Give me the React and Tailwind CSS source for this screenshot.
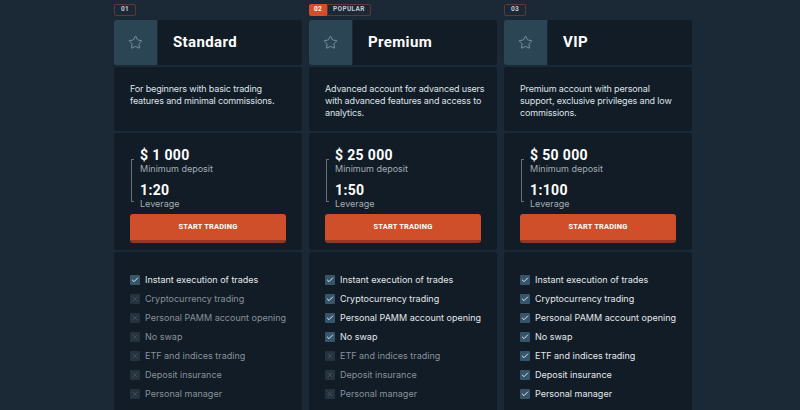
import { Star, Check, X } from 'lucide-react';

const FEATURES = [
  'Instant execution of trades',
  'Cryptocurrency trading',
  'Personal PAMM account opening',
  'No swap',
  'ETF and indices trading',
  'Deposit insurance',
  'Personal manager',
];

const PLANS = [
  {
    num: '01',
    name: 'Standard',
    text: 'For beginners with basic trading features and minimal commissions.',
    deposit: '$ 1 000',
    leverage: '1:20',
    included: 1,
  },
  {
    num: '02',
    name: 'Premium',
    popular: true,
    text: 'Advanced account for advanced users with advanced features and access to analytics.',
    deposit: '$ 25 000',
    leverage: '1:50',
    included: 4,
  },
  {
    num: '03',
    name: 'VIP',
    text: 'Premium account with personal support, exclusive privileges and low commissions.',
    deposit: '$ 50 000',
    leverage: '1:100',
    included: 7,
  },
];

const display = { fontFamily: 'Roboto, "DejaVu Sans", sans-serif' };

function Feature({ label, on }) {
  return (
    <li className="flex items-center gap-[5px] h-[19px] whitespace-nowrap">
      <span
        className={
          'w-[10px] h-[10px] rounded-[1px] flex items-center justify-center ' +
          (on ? 'bg-[#36556a] text-[#dfe7ee]' : 'bg-[#26333e] text-[#3f4d58]')
        }
      >
        {on ? <Check size={8} strokeWidth={3} /> : <X size={8} strokeWidth={3} />}
      </span>
      <span className={on ? 'text-[#e3e7eb]' : 'text-[#87919a]'}>{label}</span>
    </li>
  );
}

function PlanCard({ plan }) {
  return (
    <div className="w-[188px] flex flex-col">
      <div className="flex h-[16px] items-start text-[6.5px] font-bold tracking-wider" style={display}>
        {plan.popular ? (
          <div className="flex">
            <span className="h-[12px] px-[5px] flex items-center bg-[#d34f2c] text-white rounded-l-[2px]">
              {plan.num}
            </span>
            <span className="h-[12px] px-[5px] flex items-center border border-[#5a3a36] text-[#c3c9ce] rounded-r-[2px]">
              POPULAR
            </span>
          </div>
        ) : (
          <span className="h-[12px] px-[6px] flex items-center border border-[#5a3a36] text-[#c3c9ce] rounded-[2px]">
            {plan.num}
          </span>
        )}
      </div>

      <div className="flex h-[46px] gap-px">
        <div className="w-[43px] bg-[#2b4555] rounded-l-[3px] flex items-center justify-center text-[#8aa3b4]">
          <Star size={15} strokeWidth={1.3} />
        </div>
        <div className="flex-1 bg-[#121c26] rounded-r-[3px] flex items-center pl-[15px]">
          <span className="text-white text-[15px] font-bold tracking-wide" style={display}>
            {plan.name}
          </span>
        </div>
      </div>

      <div className="mt-[2px] h-[64px] bg-[#121c26] rounded-[3px] pl-[16px] pr-[4px] pt-[16px] text-[9px] leading-[12px] tracking-[-0.15px] text-[#dde2e6]">
        <p className="max-w-[166px]">{plan.text}</p>
      </div>

      <div className="mt-[2px] h-[118px] bg-[#121c26] rounded-[3px] px-[16px] pt-[14px]">
        <div className="relative pl-[10px]">
          <span className="absolute left-[1px] top-[12px] bottom-[7px] w-[3px] border-l border-t border-b border-[#66717b]" />
          <div className="text-white text-[14px] font-bold leading-[16px] tracking-wide" style={display}>{plan.deposit}</div>
          <div className="text-[#a3acb4] text-[9px] leading-[11px]">Minimum deposit</div>
          <div className="text-white text-[14px] font-bold leading-[16px] mt-[8px] tracking-wide" style={display}>{plan.leverage}</div>
          <div className="text-[#a3acb4] text-[9px] leading-[11px]">Leverage</div>
        </div>
        <button className="mt-[5px] w-full h-[29px] bg-[#cf4f2b] border-b-[3px] border-[#923a21] rounded-[3px] text-white text-[7.5px] font-bold tracking-wide" style={display}>
          START TRADING
        </button>
      </div>

      <ul className="mt-[2px] h-[160px] bg-[#121c26] rounded-t-[3px] px-[16px] pt-[19px] text-[9px]">
        {FEATURES.map((f, i) => (
          <Feature key={f} label={f} on={i < plan.included} />
        ))}
      </ul>
    </div>
  );
}

export default function App() {
  return (
    <div
      className="w-[800px] h-[410px] overflow-hidden bg-[#1b2836] flex gap-[7px] pl-[114px] pt-[4px]"
      style={{ fontFamily: 'Inter, "Noto Sans", sans-serif' }}
    >
      {PLANS.map(p => (
        <PlanCard key={p.num} plan={p} />
      ))}
    </div>
  );
}
